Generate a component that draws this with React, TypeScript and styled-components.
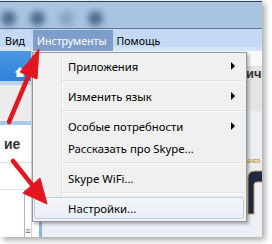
import React from 'react'
import styled, { createGlobalStyle } from 'styled-components'

const GlobalStyle = createGlobalStyle`
  html, body {
    margin: 0;
    padding: 0;
    background: #fff;
  }
  body {
    font-family: "Noto Sans", "Liberation Sans", sans-serif;
  }
`

const Page = styled.div`
  width: 272px;
  height: 244px;
  overflow: hidden;
  background: #fff;
`

const Screen = styled.div`
  position: relative;
  width: 262px;
  height: 237px;
  display: flex;
  flex-direction: column;
  overflow: hidden;
  background: #fff;
  box-shadow: 3px 3px 6px rgba(0, 0, 0, 0.35);
`

const TitleBar = styled.div`
  height: 29px;
  flex: none;
  display: flex;
  align-items: center;
  gap: 14px;
  padding: 8px 0 0 1px;
  box-sizing: border-box;
  background: linear-gradient(#e4ebf2 0 1px, #34485f 1px 2px, #a9c4e1 2px);
  border-bottom: 1px solid #5f7898;
`

const Blob = styled.div<{ $light?: boolean }>`
  width: 15px;
  height: 15px;
  border-radius: 50%;
  background: ${p => (p.$light ? '#8aa2c0' : '#4f6a8e')};
  filter: blur(3px);
`

const MenuBar = styled.div`
  height: 22px;
  flex: none;
  display: flex;
  align-items: stretch;
  background: linear-gradient(#c4daf4 0 18px, #d3e4f8 18px);
  font-size: 10.6px;
  color: #000;
`

const MenuTitle = styled.div<{ $active?: boolean; $left?: number; $right?: number }>`
  display: flex;
  align-items: center;
  padding: 0 ${p => p.$right ?? 5}px 0 ${p => p.$left ?? 5}px;
  margin-top: 1px;
  background: ${p => (p.$active ? '#7f9dca' : 'transparent')};
  color: ${p => (p.$active ? '#fff' : '#000')};
`

const Body = styled.div`
  flex: 1;
  display: flex;
  min-height: 0;
`

const LeftCol = styled.div`
  width: 31px;
  flex: none;
  display: flex;
  flex-direction: column;
  border-right: 1px solid #c9d6e4;
  background: #fff;
`

const HomeTile = styled.div`
  height: 30px;
  display: flex;
  align-items: flex-end;
  justify-content: flex-end;
  padding: 0 5px 3px 0;
  box-sizing: border-box;
  background: linear-gradient(#4a98e6, #2f82d8);
`

const Strip = styled.div<{ $tone: string }>`
  height: 4px;
  background: ${p => p.$tone};
`

const GrayPanel = styled.div`
  height: 36px;
  background: #ececec;
`

const ContactHead = styled.div`
  height: 37px;
  display: flex;
  align-items: center;
  padding-left: 4px;
  font-family: "Liberation Sans", sans-serif;
  font-weight: bold;
  font-size: 14px;
  color: #333;
  border-bottom: 1px solid #dedede;
`

const ContactRow = styled.div`
  height: 26px;
  border-bottom: 1px solid #dedede;
`

const ScrollArea = styled.div`
  flex: 1;
  margin-left: 24px;
  border-left: 1px solid #b5b5b5;
  display: flex;
  align-items: flex-end;
  justify-content: center;
  font-size: 9px;
  color: #666;
`

const Main = styled.div`
  flex: 1;
  display: flex;
  flex-direction: column;
  min-width: 0;
`

const TopStrip = styled.div`
  height: 15px;
  background: #f8f8f8;
`

const HeaderBand = styled.div`
  height: 45px;
  padding: 1px 0 0 214px;
  box-sizing: border-box;
  background: #e4e4e4;
  font-family: "Liberation Sans", sans-serif;
  font-weight: bold;
  font-size: 13px;
  line-height: 14px;
  color: #333;
  white-space: nowrap;
`

const ContentPanel = styled.div`
  flex: 1;
  display: flex;
  flex-direction: column;
  padding-left: 215px;
  background: linear-gradient(90deg, #fff 0 7px, #8fb3e0 7px 10px, #eaeff6 10px);
  white-space: nowrap;
`

const LogoSmall = styled.div`
  margin-top: 47px;
  font-family: "Liberation Sans", sans-serif;
  font-weight: bold;
  font-size: 5px;
  line-height: 6px;
  letter-spacing: -0.2px;
  color: #c69a3a;
`

const LogoMark = styled.svg`
  display: block;
  margin-top: 6px;
`

const Dropdown = styled.div`
  position: absolute;
  left: 32px;
  top: 52px;
  width: 215px;
  box-sizing: border-box;
  padding: 2px 2px 2px 1px;
  background: #f0f0f0;
  border: 1px solid #979797;
  box-shadow: 2px 2px 3px rgba(0, 0, 0, 0.3);
  font-size: 11.3px;
  color: #000;

  &::before {
    content: '';
    position: absolute;
    left: 28px;
    top: 0;
    bottom: 0;
    width: 1px;
    background: #e2e3e3;
    box-shadow: 1px 0 #fff;
  }
`

const Item = styled.div<{ $hover?: boolean }>`
  position: relative;
  height: 22px;
  display: flex;
  align-items: center;
  justify-content: space-between;
  padding: 0 8px 0 33px;
  box-sizing: border-box;
  border-radius: 3px;
  border: 1px solid ${p => (p.$hover ? '#b9cde3' : 'transparent')};
  background: ${p => (p.$hover ? 'linear-gradient(#f3f6fa, #e8eef6)' : 'transparent')};
`

const SubArrow = styled.span`
  width: 0;
  height: 0;
  border-left: 4px solid #000;
  border-top: 4px solid transparent;
  border-bottom: 4px solid transparent;
`

const Separator = styled.div`
  position: relative;
  height: 8px;
  margin-left: 28px;

  &::after {
    content: '';
    position: absolute;
    left: 0;
    right: 0;
    top: 3px;
    height: 1px;
    background: #e0e0e0;
    box-shadow: 0 1px #fff;
  }
`

const Overlay = styled.svg`
  position: absolute;
  inset: 0;
  pointer-events: none;
`

const House = () => (
  <svg width="12" height="12" viewBox="0 0 12 12">
    <path d="M6 1 L11.5 6.5 H9.5 V11 H2.5 V6.5 H0.5 Z" fill="#fff" />
  </svg>
)

const menu: ({ label: string; sub?: boolean; hover?: boolean } | 'sep')[] = [
  { label: 'Приложения', sub: true },
  'sep',
  { label: 'Изменить язык', sub: true },
  'sep',
  { label: 'Особые потребности', sub: true },
  { label: 'Рассказать про Skype...' },
  'sep',
  { label: 'Skype WiFi...' },
  'sep',
  { label: 'Настройки...', hover: true },
]

export default function App() {
  return (
    <Page>
      <GlobalStyle />
      <Screen>
        <TitleBar>
          <Blob />
          <Blob />
          <Blob $light />
          <Blob />
        </TitleBar>
        <MenuBar>
          <MenuTitle $left={5} $right={8}>Вид</MenuTitle>
          <MenuTitle $active $left={4} $right={6}>Инструменты</MenuTitle>
          <MenuTitle $left={4}>Помощь</MenuTitle>
        </MenuBar>
        <Body>
          <LeftCol>
            <HomeTile>
              <House />
            </HomeTile>
            <Strip $tone="#bcd5ef" />
            <GrayPanel />
            <Strip $tone="#a9c9ec" />
            <ContactHead>ие</ContactHead>
            <ContactRow />
            <ScrollArea>≡</ScrollArea>
          </LeftCol>
          <Main>
            <TopStrip />
            <HeaderBand>ич</HeaderBand>
            <ContentPanel>
              <LogoSmall>SHED</LogoSmall>
              <LogoMark width="16" height="46" viewBox="0 0 16 46">
                <path d="M1 44 V8 Q1 1 8 1 H16 V12 H10 Q7 12 7 15 V44 Z" fill="#1d2a44" stroke="#c9a25a" strokeWidth="1" />
              </LogoMark>
            </ContentPanel>
          </Main>
        </Body>

        <Dropdown>
          {menu.map((m, i) =>
            m === 'sep' ? (
              <Separator key={i} />
            ) : (
              <Item key={i} $hover={m.hover}>
                <span>{m.label}</span>
                {m.sub && <SubArrow />}
              </Item>
            )
          )}
        </Dropdown>

        <Overlay width="262" height="237" viewBox="0 0 262 237">
          <g fill="#e3161f" stroke="#e3161f" strokeLinejoin="round">
            <line x1="9" y1="122" x2="31" y2="70" strokeWidth="4.5" strokeLinecap="round" />
            <polygon points="39,49 37,79 20,72" strokeWidth="1" />
            <line x1="13" y1="161" x2="33" y2="186" strokeWidth="4.5" strokeLinecap="round" />
            <polygon points="47,204 23,193 40,178" strokeWidth="1" />
          </g>
        </Overlay>
      </Screen>
    </Page>
  )
}
